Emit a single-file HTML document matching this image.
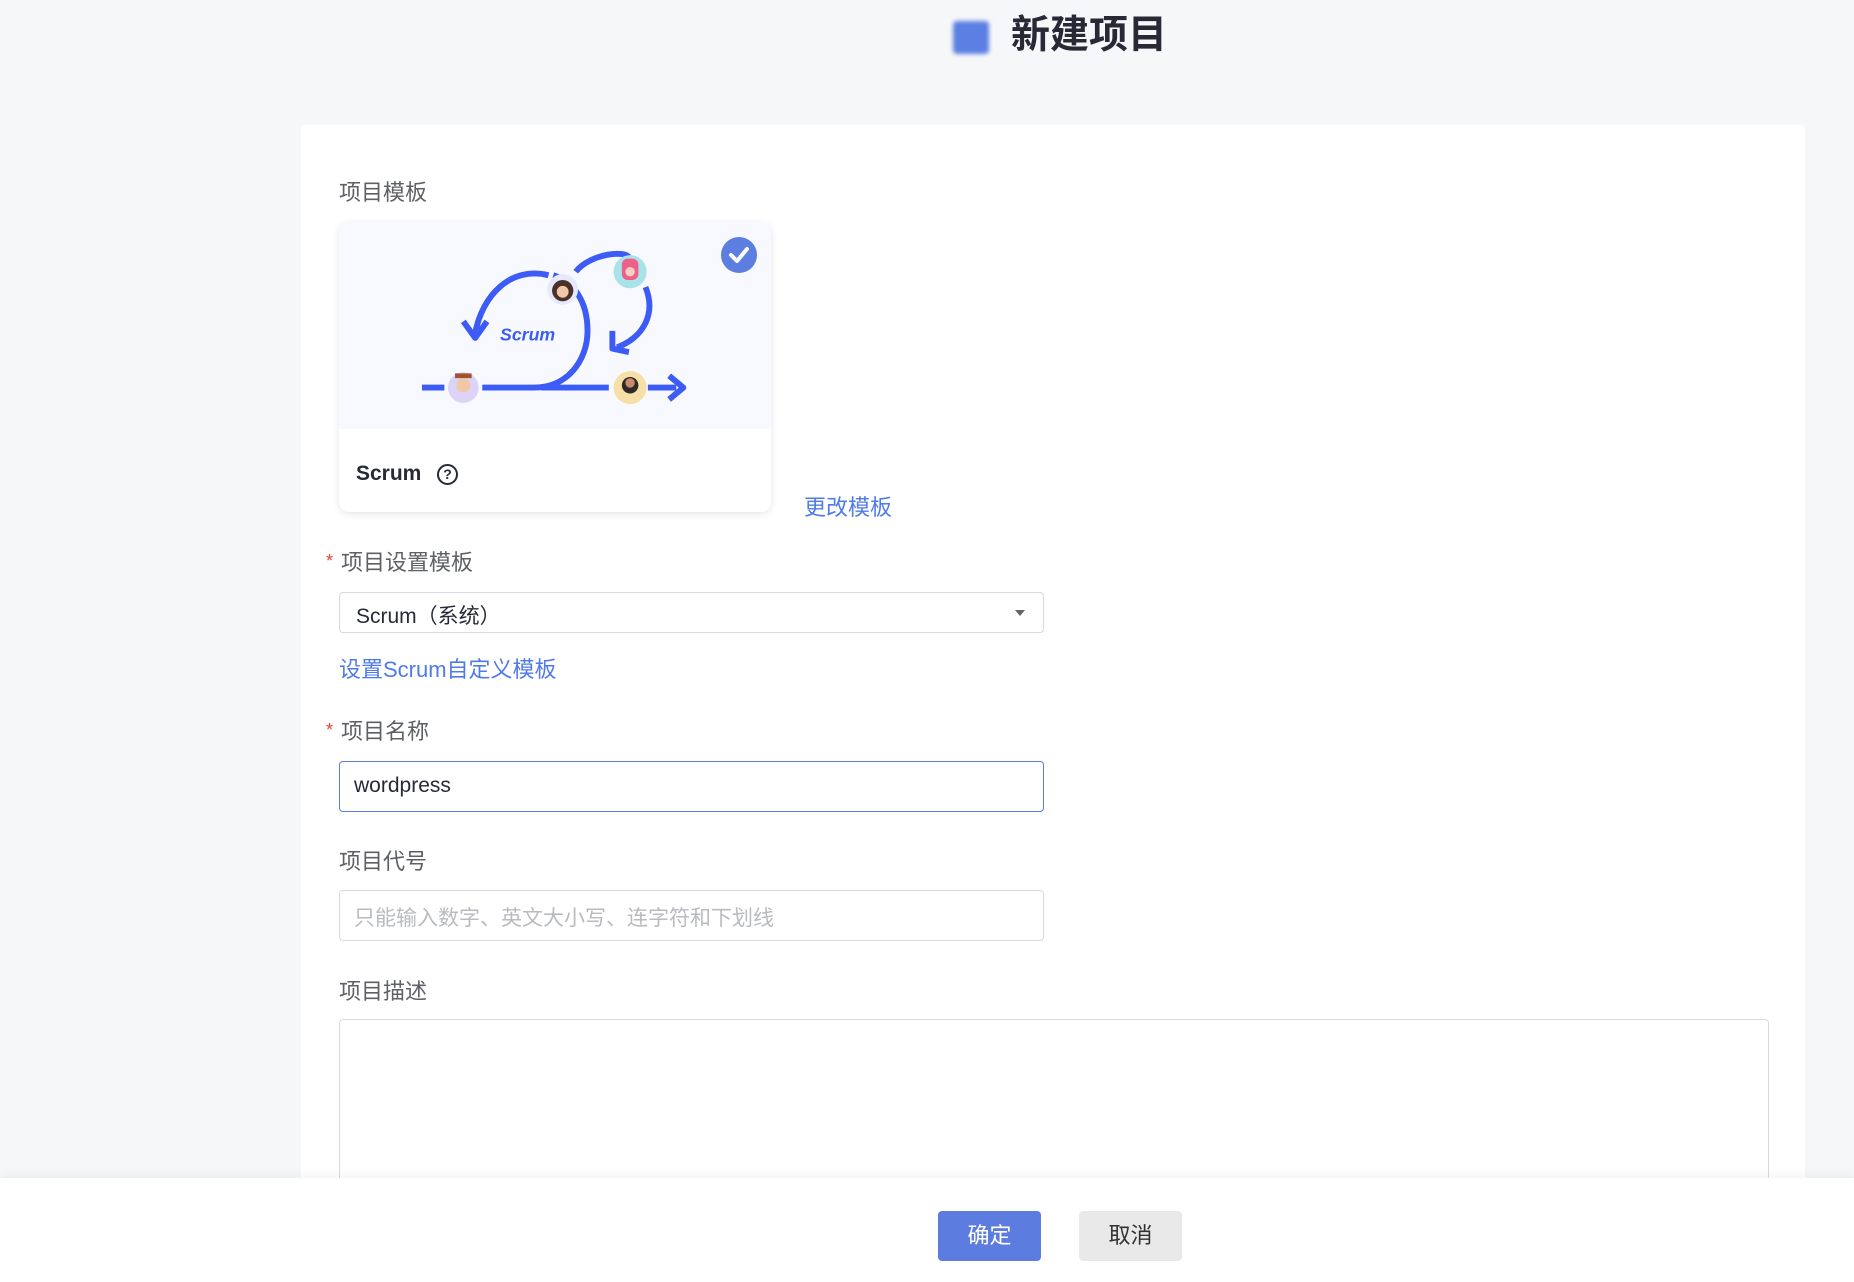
<!DOCTYPE html>
<html><head><meta charset="utf-8"><style>
*{box-sizing:border-box;margin:0;padding:0}
body{width:1854px;height:1282px;background:#f6f7f9;font-family:"Liberation Sans","Noto Sans CJK SC",sans-serif;position:relative;overflow:hidden;color:#303133}
.a{position:absolute}
.lbl{font-size:22px;color:#5e6066;line-height:24px}
.star{color:#f03a3a;font-size:18px}
.box{border:1px solid #d9dadd;border-radius:4px;background:#fff}
.link{color:#4f7be8;font-size:22px}
</style></head><body>
<div class="a" style="left:953px;top:21px;width:36px;height:33px;background:#5b7fe2;border-radius:4px;filter:blur(2px)"></div>
<div class="a" style="left:1011px;top:13px;font-size:39px;font-weight:bold;color:#272a36;line-height:46px">新建项目</div>
<div class="a" style="left:301px;top:125px;width:1504px;height:1100px;background:#fff;border-radius:4px"></div>
<div class="a lbl" style="left:339px;top:181px">项目模板</div>
<div class="a" style="left:339px;top:222px;width:432px;height:290px;background:#fff;border-radius:10px;box-shadow:0 2px 8px rgba(0,0,0,0.1);overflow:hidden">
<svg width="432" height="207" viewBox="287 188 365 175" style="display:block;background:#f8f9ff">
<g fill="none" stroke="#3d5cf5" stroke-width="5" stroke-linecap="butt">
<path d="M357 328H376M408 328H452C480 328 497 305 497 280C497 255 485 238 468 233"/>
<path d="M458 328H515M548 328H572"/>
<path d="M464 233C432 225 408 250 402 282"/>
<path d="M392 272L402 286L412 272" stroke-linejoin="round"/>
<path d="M487 230C500 214 530 212 532 218M546 243C555 265 545 285 522 294"/>
<path d="M518 280L518 295L532 298" stroke-linejoin="round"/>
<path d="M566 318L578 328L566 338" stroke-linejoin="round"/>
</g>
<text x="423" y="288" font-family="Liberation Sans" font-weight="bold" font-style="italic" font-size="15" fill="#3d5cf5">Scrum</text>
<circle cx="392" cy="328" r="13" fill="#dcd3f7"/><circle cx="392" cy="326" r="6" fill="#f0c8a8"/><path d="M385 320h14v-4h-14z" fill="#a0532d"/>
<circle cx="476" cy="245" r="13" fill="#e6e9fb"/><circle cx="476" cy="246" r="9" fill="#4a3228"/><circle cx="476" cy="247" r="5" fill="#f0c8a8"/>
<circle cx="533" cy="230" r="14" fill="#a8e3ea"/><rect x="526" y="219" width="14" height="18" rx="5" fill="#ee5f8a"/><circle cx="533" cy="230" r="4" fill="#f3d0c0"/>
<circle cx="533" cy="328" r="14" fill="#f6e0a8"/><circle cx="533" cy="326" r="7" fill="#2d2a28"/><circle cx="533" cy="324" r="4" fill="#c88a6a"/>
</svg>
<div class="a" style="left:382px;top:15px;width:36px;height:36px;border-radius:50%;background:#5b7ee0"><svg width="36" height="36"><path d="M10 18l6 6l10-12" fill="none" stroke="#fff" stroke-width="4" stroke-linecap="round" stroke-linejoin="round"/></svg></div>
<div class="a" style="left:17px;top:240px;font-size:21px;font-weight:bold;color:#272a36">Scrum</div>
<div class="a" style="left:98px;top:242px;width:21px;height:21px;border:2.5px solid #272a36;border-radius:50%;font-size:14px;font-weight:bold;text-align:center;line-height:16px;color:#272a36">?</div>
</div>
<div class="a link" style="left:804px;top:490px">更改模板</div>
<div class="a star" style="left:326px;top:551px">*</div>
<div class="a lbl" style="left:341px;top:551px">项目设置模板</div>
<div class="a box" style="left:339px;top:592px;width:705px;height:41px"><span class="a" style="left:16px;top:7px;font-size:21px;color:#272a36">Scrum（系统）</span><span class="a" style="right:18px;top:17px;border:5px solid transparent;border-top:6px solid #666"></span></div>
<div class="a link" style="left:339px;top:652px">设置Scrum自定义模板</div>
<div class="a star" style="left:326px;top:720px">*</div>
<div class="a lbl" style="left:341px;top:720px">项目名称</div>
<div class="a box" style="left:339px;top:761px;width:705px;height:51px;border-color:#5b7ee0"><span class="a" style="left:14px;top:12px;font-size:21px;color:#272a36">wordpress</span></div>
<div class="a lbl" style="left:339px;top:850px">项目代号</div>
<div class="a box" style="left:339px;top:890px;width:705px;height:51px"><span class="a" style="left:14px;top:11px;font-size:21px;color:#b9bbc0">只能输入数字、英文大小写、连字符和下划线</span></div>
<div class="a lbl" style="left:339px;top:980px">项目描述</div>
<div class="a box" style="left:339px;top:1019px;width:1430px;height:220px"></div>
<div class="a" style="left:0;top:1178px;width:1854px;height:104px;background:#fff;box-shadow:0 -4px 8px rgba(0,0,0,0.04)"></div>
<div class="a" style="left:938px;top:1211px;width:103px;height:50px;background:#5d7ce0;border-radius:4px;color:#fff;font-size:22px;text-align:center;line-height:50px">确定</div>
<div class="a" style="left:1079px;top:1211px;width:103px;height:50px;background:#e9e9ea;border-radius:4px;color:#303133;font-size:22px;text-align:center;line-height:50px">取消</div>
</body></html>
